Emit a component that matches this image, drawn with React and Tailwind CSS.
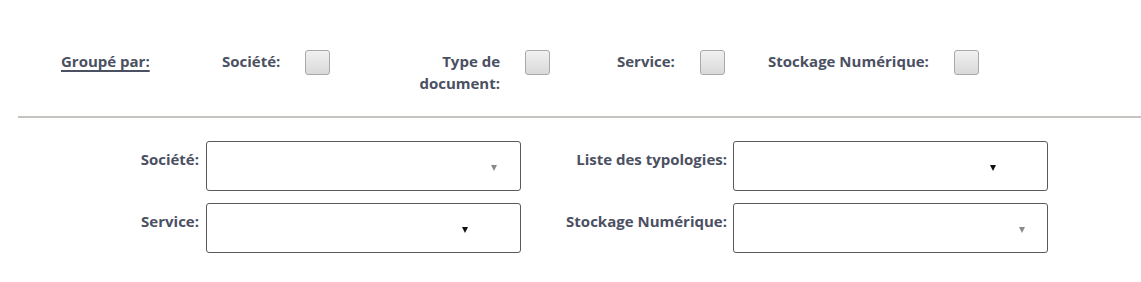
import React from 'react';

const Checkbox = () => (
  <span className="block w-[25px] h-[25px] rounded-[3px] border border-[#a9a9a9] bg-gradient-to-b from-[#f1f1f1] to-[#d9d9d9]" />
);

const Arrow = ({ dark, right }) => (
  <span
    className={
      'absolute top-[23px] w-0 h-0 border-l-[3px] border-r-[3px] border-t-[6px] border-l-transparent border-r-transparent ' +
      (dark ? 'border-t-[#111111]' : 'border-t-[#8a8a8a]') +
      ' ' +
      right
    }
  />
);

const SelectBox = ({ dark, right }) => (
  <div className="relative w-[315px] h-[50px] rounded-[3px] border border-[#5a5a5a] bg-white">
    <Arrow dark={dark} right={right} />
  </div>
);

const App = () => {
  return (
    <div
      className="w-[1141px] h-[282px] bg-white text-[15px] font-bold text-[#4b5062] overflow-hidden"
      style={{ fontFamily: '"Open Sans", "Noto Sans", sans-serif' }}
    >
      {/* Grouping options */}
      <div className="flex items-start pt-[50px] pl-[61px] leading-[22px]">
        <span className="w-[89px] whitespace-nowrap underline underline-offset-[3px] decoration-[1.5px] [text-decoration-skip-ink:none]">Groupé par:</span>

        <span className="ml-[72px] w-[59px] whitespace-nowrap">Société:</span>
        <span className="ml-[24px]"><Checkbox /></span>

        <span className="ml-[88px] w-[82px] text-right">Type de document:</span>
        <span className="ml-[25px]"><Checkbox /></span>

        <span className="ml-[67px] w-[58px] whitespace-nowrap">Service:</span>
        <span className="ml-[25px]"><Checkbox /></span>

        <span className="ml-[43px] w-[162px] whitespace-nowrap">Stockage Numérique:</span>
        <span className="ml-[24px]"><Checkbox /></span>
      </div>

      <div className="ml-[18px] mt-[22px] h-[2px] bg-[#c6c4c0]" />

      {/* Filters */}
      <div className="flex flex-col gap-[12px] mt-[23px]">
        <div className="flex items-start">
          <span className="w-[199px] text-right leading-[20px] mt-[8px]">Société:</span>
          <span className="ml-[7px]"><SelectBox right="right-[23px]" /></span>
          <span className="w-[206px] text-right leading-[20px] mt-[8px]">Liste des typologies:</span>
          <span className="ml-[6px]"><SelectBox dark right="right-[51px]" /></span>
        </div>
        <div className="flex items-start">
          <span className="w-[199px] text-right leading-[20px] mt-[8px]">Service:</span>
          <span className="ml-[7px]"><SelectBox dark right="right-[52px]" /></span>
          <span className="w-[206px] text-right leading-[20px] mt-[8px]">Stockage Numérique:</span>
          <span className="ml-[6px]"><SelectBox right="right-[22px]" /></span>
        </div>
      </div>
    </div>
  );
};

export default App;
